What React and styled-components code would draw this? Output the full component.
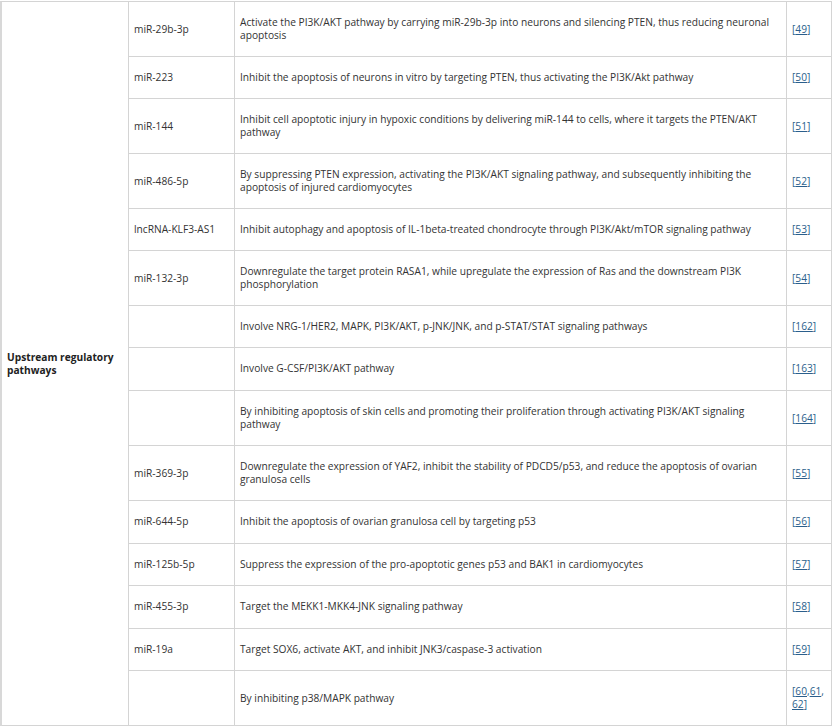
import React from "react";
import styled, { createGlobalStyle } from "styled-components";

const GlobalStyle = createGlobalStyle`
  body {
    margin: 1px 0 0 0;
    background: #fff;
    font-family: "Open Sans", "Noto Sans", sans-serif;
    color: #333;
  }
`;

const Table = styled.table`
  width: 832px;
  table-layout: fixed;
  border-collapse: separate;
  border-spacing: 0;
  border-top: 1px solid #d4d4d4;
  border-left: 2px solid #d8d8d8;
  font-size: 10.2px;
  line-height: 13px;
`;

const Col = styled.col`
  width: ${(p) => p.$w}px;
`;

const Cell = styled.td`
  padding: 14px 5px ${(p) => (p.$extra ? 15 : 14)}px;
  vertical-align: middle;
  text-align: left;
  border-right: 1px solid #d4d4d4;
  border-bottom: 1px solid #d4d4d4;
  color: #333;
`;

const GroupCell = styled(Cell)`
  font-weight: 700;
  color: #222;
  line-height: 12.5px;
`;

const RefCell = styled(Cell)`
  padding-left: 5px;
  padding-right: 4px;
`;

const RefWrap = styled.span`
  color: #2b5f8c;
`;

const RefLink = styled.a`
  color: #2b5f8c;
  text-decoration: underline;
  text-underline-offset: 1px;
`;

const rows = [
  { gene: "miR-29b-3p", text: "Activate the PI3K/AKT pathway by carrying miR-29b-3p into neurons and silencing PTEN, thus reducing neuronal apoptosis", refs: ["49"] },
  { gene: "miR-223", text: "Inhibit the apoptosis of neurons in vitro by targeting PTEN, thus activating the PI3K/Akt pathway", refs: ["50"] },
  { gene: "miR-144", text: "Inhibit cell apoptotic injury in hypoxic conditions by delivering miR-144 to cells, where it targets the PTEN/AKT pathway", refs: ["51"] },
  { gene: "miR-486-5p", text: "By suppressing PTEN expression, activating the PI3K/AKT signaling pathway, and subsequently inhibiting the apoptosis of injured cardiomyocytes", refs: ["52"] },
  { gene: "lncRNA-KLF3-AS1", text: "Inhibit autophagy and apoptosis of IL-1beta-treated chondrocyte through PI3K/Akt/mTOR signaling pathway", refs: ["53"] },
  { gene: "miR-132-3p", text: "Downregulate the target protein RASA1, while upregulate the expression of Ras and the downstream PI3K phosphorylation", refs: ["54"] },
  { gene: "", text: "Involve NRG-1/HER2, MAPK, PI3K/AKT, p-JNK/JNK, and p-STAT/STAT signaling pathways", refs: ["162"] },
  { gene: "", text: "Involve G-CSF/PI3K/AKT pathway", refs: ["163"], extra: true },
  { gene: "", text: "By inhibiting apoptosis of skin cells and promoting their proliferation through activating PI3K/AKT signaling pathway", refs: ["164"] },
  { gene: "miR-369-3p", text: "Downregulate the expression of YAF2, inhibit the stability of PDCD5/p53, and reduce the apoptosis of ovarian granulosa cells", refs: ["55"] },
  { gene: "miR-644-5p", text: "Inhibit the apoptosis of ovarian granulosa cell by targeting p53", refs: ["56"], extra: true },
  { gene: "miR-125b-5p", text: "Suppress the expression of the pro-apoptotic genes p53 and BAK1 in cardiomyocytes", refs: ["57"] },
  { gene: "miR-455-3p", text: "Target the MEKK1-MKK4-JNK signaling pathway", refs: ["58"], extra: true },
  { gene: "miR-19a", text: "Target SOX6, activate AKT, and inhibit JNK3/caspase-3 activation", refs: ["59"] },
  { gene: "", text: "By inhibiting p38/MAPK pathway", refs: ["60", "61", "62"] },
];

const Refs = ({ refs }) => (
  <RefWrap>
    [
    {refs.map((r, i) => (
      <React.Fragment key={r}>
        {i > 0 && (
          <>
            ,<wbr />
          </>
        )}
        <RefLink href={`#ref${r}`}>{r}</RefLink>
      </React.Fragment>
    ))}
    ]
  </RefWrap>
);

export default function App() {
  return (
    <>
      <GlobalStyle />
      <Table>
        <colgroup>
          <Col $w={127} />
          <Col $w={106} />
          <Col $w={552} />
          <Col $w={45} />
        </colgroup>
        <tbody>
          {rows.map((row, i) => (
            <tr key={i}>
              {i === 0 && (
                <GroupCell rowSpan={rows.length}>Upstream regulatory pathways</GroupCell>
              )}
              <Cell $extra={row.extra}>{row.gene}</Cell>
              <Cell $extra={row.extra}>{row.text}</Cell>
              <RefCell $extra={row.extra}>
                <Refs refs={row.refs} />
              </RefCell>
            </tr>
          ))}
        </tbody>
      </Table>
    </>
  );
}
